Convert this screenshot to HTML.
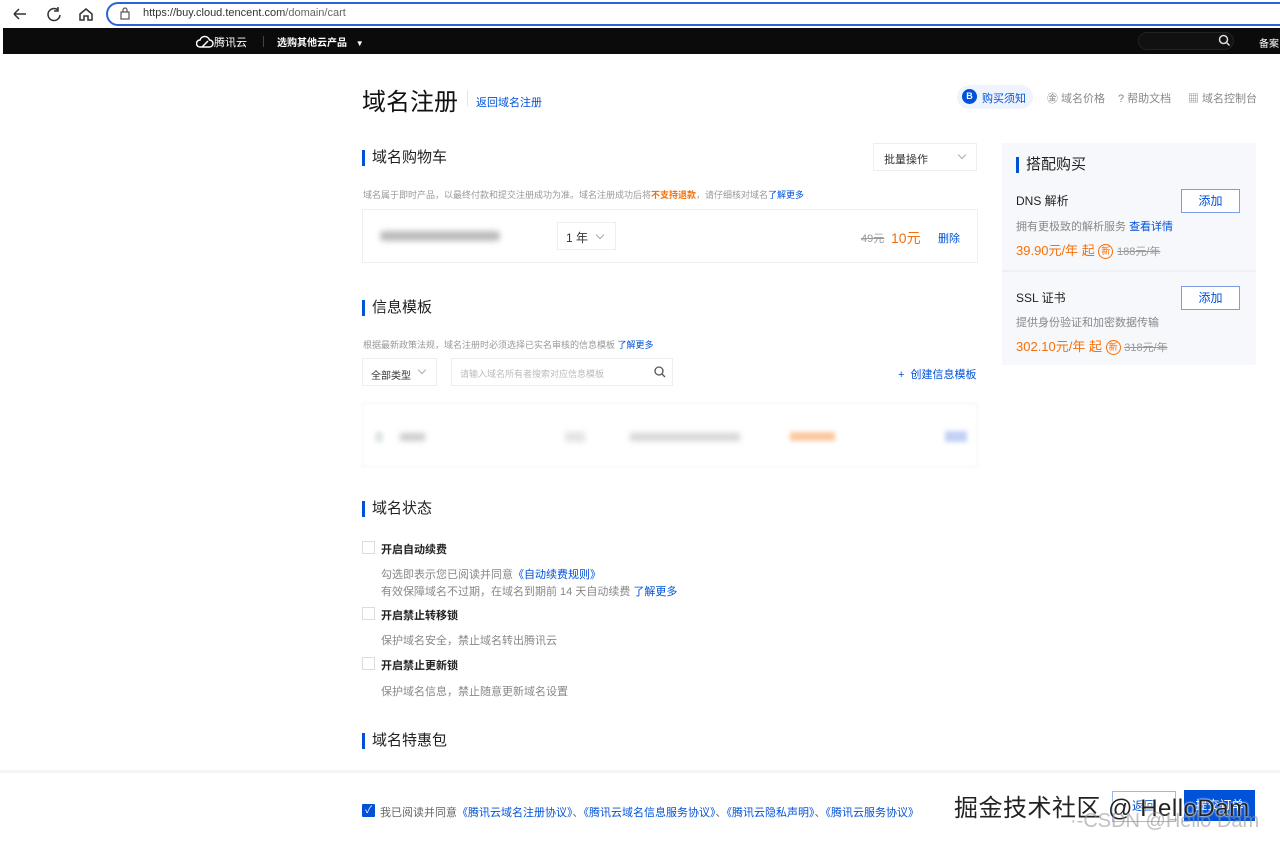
<!DOCTYPE html>
<html><head><meta charset="utf-8">
<style>
*{margin:0;padding:0;box-sizing:border-box}
body{width:1280px;height:843px;overflow:hidden;background:#fff;font-family:"Liberation Sans","Noto Sans CJK SC",sans-serif;color:#333;position:relative}
.a{position:absolute;white-space:nowrap}
.blue{color:#0052d9}
.h2{font-size:15px;color:#222;padding-left:7px;border-left:3px solid #0052d9;line-height:16px}
.g{color:#888}
.box{border:1px solid #eceef2;position:absolute;white-space:nowrap}
.cb{position:absolute;width:13px;height:13px;border:1px solid #dcdcdc;background:#fff}
.btn{position:absolute;border:1px solid #0052d9;color:#0052d9;font-size:12px;text-align:center;background:#fff}
.chev{position:absolute;width:6px;height:6px;border-right:1px solid #aaa;border-bottom:1px solid #aaa;transform:rotate(45deg)}
</style></head><body>
<div class="a" style="left:0;top:0;width:1280px;height:28px;background:#fff"></div>
<svg class="a" style="left:12px;top:6px" width="90" height="16" fill="none" stroke="#333" stroke-width="1.5">
<path d="M2 8h12M2 8l5-5M2 8l5 5"/>
<path d="M46 4a6 6 0 1 0 2 5"/><path d="M46 1v4h-4"/>
<path d="M68 8l6-5 6 5v6h-4v-4h-4v4h-4z"/>
</svg>
<div class="a" style="left:106px;top:2px;width:1180px;height:24px;border:2px solid #2b63d9;border-right:none;border-radius:12px 0 0 12px"></div>
<svg class="a" style="left:120px;top:7px" width="10" height="13" fill="none" stroke="#555" stroke-width="1.2"><rect x="1" y="5" width="8" height="7"/><path d="M3 5V3a2 2 0 0 1 4 0v2"/></svg>
<div class="a" style="left:143px;top:7px;font-size:11px;color:#333">https://<span>buy.cloud.tencent.com</span><span style="color:#666">/domain/cart</span></div>
<div class="a" style="left:3px;top:28px;width:1277px;height:26px;background:#0b0b0b"></div>
<svg class="a" style="left:196px;top:35px" width="18" height="13" fill="none" stroke="#fff" stroke-width="1.5"><path d="M4 12a3.5 3.5 0 0 1 0-7a5 5 0 0 1 9.5 0a3.5 3.5 0 0 1 0 7z"/><path d="M6 12l6-6"/></svg>
<div class="a" style="left:214px;top:34px;font-size:11px;color:#fff">腾讯云</div>
<div class="a" style="left:263px;top:36px;width:1px;height:11px;background:#444"></div>
<div class="a" style="left:277px;top:34px;font-size:10px;color:#fff;font-weight:bold">选购其他云产品 <span style="margin-left:6px;font-size:8px">▼</span></div>
<div class="a" style="left:1138px;top:32px;width:96px;height:18px;border:1px solid #222;border-radius:9px;background:#111"></div>
<svg class="a" style="left:1218px;top:34px" width="13" height="13" fill="none" stroke="#ddd" stroke-width="1.5"><circle cx="5.5" cy="5.5" r="4"/><path d="M8.5 8.5l3 3"/></svg>
<div class="a" style="left:1259px;top:35px;font-size:10px;color:#fff">备案</div>
<div class="a" style="left:362px;top:82px;font-size:24px;color:#111">域名注册</div>
<div class="a" style="left:467px;top:90px;width:1px;height:16px;background:#e5e5e5"></div>
<div class="a blue" style="left:476px;top:94px;font-size:11px">返回域名注册</div>
<div class="a" style="left:957px;top:85px;width:76px;height:24px;background:#eef3fd;border-radius:12px"></div>
<div class="a" style="left:962px;top:89px;width:15px;height:15px;border-radius:50%;background:#0052d9;color:#fff;font-size:9px;text-align:center;line-height:15px;font-weight:bold">B</div>
<div class="a blue" style="left:982px;top:90px;font-size:11px">购买须知</div>
<div class="a g" style="left:1047px;top:90px;font-size:11px">㊎ 域名价格</div>
<div class="a g" style="left:1118px;top:90px;font-size:11px">? 帮助文档</div>
<div class="a g" style="left:1188px;top:90px;font-size:11px">▦ 域名控制台</div>
<div class="a h2" style="left:362px;top:150px">域名购物车</div>
<div class="box" style="left:873px;top:143px;width:104px;height:28px;font-size:11px;padding:7px 10px;color:#333">批量操作</div>
<div class="chev" style="left:959px;top:152px"></div>
<div class="a" style="left:363px;top:188px;font-size:9px;color:#999">域名属于即时产品，以最终付款和提交注册成功为准。域名注册成功后将<b style="color:#f5700a">不支持退款</b>，请仔细核对域名<span class="blue">了解更多</span></div>
<div class="box" style="left:362px;top:209px;width:616px;height:54px"></div>
<div class="a" style="left:380px;top:231px;width:120px;height:10px;background:#bbb;filter:blur(3px);border-radius:4px"></div>
<div class="box" style="left:557px;top:222px;width:59px;height:28px;font-size:12px;padding:6px 8px">1 年</div>
<div class="chev" style="left:597px;top:232px"></div>
<div class="a" style="left:861px;top:230px;font-size:11px;color:#999;text-decoration:line-through">49元</div>
<div class="a" style="left:891px;top:228px;font-size:14px;color:#f5700a">10元</div>
<div class="a blue" style="left:938px;top:230px;font-size:11px">删除</div>
<div class="a h2" style="left:362px;top:300px">信息模板</div>
<div class="a" style="left:363px;top:338px;font-size:9px;color:#999">根据最新政策法规，域名注册时必须选择已实名审核的信息模板 <span class="blue">了解更多</span></div>
<div class="box" style="left:362px;top:358px;width:75px;height:28px;font-size:10px;padding:8px 8px">全部类型</div>
<div class="chev" style="left:419px;top:367px"></div>
<div class="box" style="left:451px;top:358px;width:222px;height:28px;font-size:9px;color:#bbb;padding:8px 8px">请输入域名所有者搜索对应信息模板</div>
<svg class="a" style="left:654px;top:366px" width="12" height="12" fill="none" stroke="#555" stroke-width="1.3"><circle cx="5" cy="5" r="4"/><path d="M8 8l3 3"/></svg>
<div class="a blue" style="left:898px;top:366px;font-size:11px">+ &nbsp;创建信息模板</div>
<div class="box" style="left:362px;top:403px;width:616px;height:64px;border-color:#f3f3f3;filter:blur(1px)"></div>
<div class="a" style="left:375px;top:432px;width:8px;height:10px;background:#e0e6e6;filter:blur(2px)"></div>
<div class="a" style="left:400px;top:433px;width:25px;height:8px;background:#ccc;filter:blur(3px)"></div>
<div class="a" style="left:565px;top:432px;width:20px;height:10px;background:#e3e3e3;filter:blur(3px)"></div>
<div class="a" style="left:630px;top:433px;width:110px;height:8px;background:#d5d5d5;filter:blur(3px)"></div>
<div class="a" style="left:790px;top:432px;width:45px;height:9px;background:#fbc9a0;filter:blur(2px)"></div>
<div class="a" style="left:945px;top:431px;width:22px;height:11px;background:#c3d1f5;filter:blur(2px)"></div>
<div class="a h2" style="left:362px;top:501px">域名状态</div>
<div class="cb" style="left:362px;top:541px"></div>
<div class="a" style="left:381px;top:541px;font-size:11px;font-weight:bold;color:#222">开启自动续费</div>
<div class="a g" style="left:381px;top:566px;font-size:11px">勾选即表示您已阅读并同意<span class="blue">《自动续费规则》</span></div>
<div class="a g" style="left:381px;top:583px;font-size:11px">有效保障域名不过期，在域名到期前 14 天自动续费 <span class="blue">了解更多</span></div>
<div class="cb" style="left:362px;top:607px"></div>
<div class="a" style="left:381px;top:607px;font-size:11px;font-weight:bold;color:#222">开启禁止转移锁</div>
<div class="a g" style="left:381px;top:632px;font-size:11px">保护域名安全，禁止域名转出腾讯云</div>
<div class="cb" style="left:362px;top:657px"></div>
<div class="a" style="left:381px;top:657px;font-size:11px;font-weight:bold;color:#222">开启禁止更新锁</div>
<div class="a g" style="left:381px;top:683px;font-size:11px">保护域名信息，禁止随意更新域名设置</div>
<div class="a h2" style="left:362px;top:733px">域名特惠包</div>
<div class="a" style="left:1002px;top:143px;width:254px;height:222px;background:#f6f8fb;border-radius:2px"></div>
<div class="a" style="left:1002px;top:270px;width:254px;height:2px;background:#eef0f4"></div>
<div class="a h2" style="left:1016px;top:157px">搭配购买</div>
<div class="a" style="left:1016px;top:192px;font-size:12px;color:#222">DNS 解析</div>
<div class="btn" style="left:1181px;top:189px;width:59px;height:24px;line-height:22px;border-color:#7d9ce8">添加</div>
<div class="a g" style="left:1016px;top:218px;font-size:11px">拥有更极致的解析服务 <span class="blue">查看详情</span></div>
<div class="a" style="left:1016px;top:240px;font-size:13px;color:#f5700a">39.90元/年 起 <span style="display:inline-block;width:15px;height:15px;border:1px solid #f5700a;border-radius:50%;font-size:9px;text-align:center;line-height:13px;vertical-align:1px">新</span> <span style="color:#999;font-size:11px;text-decoration:line-through">188元/年</span></div>
<div class="a" style="left:1016px;top:289px;font-size:12px;color:#222">SSL 证书</div>
<div class="btn" style="left:1181px;top:286px;width:59px;height:24px;line-height:22px;border-color:#7d9ce8">添加</div>
<div class="a g" style="left:1016px;top:314px;font-size:11px">提供身份验证和加密数据传输</div>
<div class="a" style="left:1016px;top:336px;font-size:13px;color:#f5700a">302.10元/年 起 <span style="display:inline-block;width:15px;height:15px;border:1px solid #f5700a;border-radius:50%;font-size:9px;text-align:center;line-height:13px;vertical-align:1px">新</span> <span style="color:#999;font-size:11px;text-decoration:line-through">318元/年</span></div>
<div class="a" style="left:0;top:770px;width:1280px;height:73px;background:#fff;border-top:3px solid #f3f4f6"></div>
<div class="a" style="left:362px;top:804px;width:13px;height:13px;background:#0052d9;border-radius:1px;color:#fff;font-size:10px;text-align:center;line-height:13px">✓</div>
<div class="a" style="left:380px;top:804px;font-size:11px;color:#666">我已阅读并同意<span class="blue">《腾讯云域名注册协议》</span>、<span class="blue">《腾讯云域名信息服务协议》</span>、<span class="blue">《腾讯云隐私声明》</span>、<span class="blue">《腾讯云服务协议》</span></div>
<div class="btn" style="left:1112px;top:791px;width:64px;height:31px;line-height:29px;border-color:#9fb6ee">返回</div>
<div class="a" style="left:1184px;top:790px;width:71px;height:31px;background:#0052d9;color:#fff;font-size:12px;text-align:center;line-height:31px">提交订单</div>
<div class="a" style="left:954px;top:788px;font-size:24px;color:#222;letter-spacing:0.5px;text-shadow:0 0 2px #fff,0 0 2px #fff">掘金技术社区 @ HelloDam</div>
<div class="a" style="left:1070px;top:810px;font-size:20px;color:rgba(150,150,150,.6)">·-CSDN @Hello Dam</div>
</body></html>
